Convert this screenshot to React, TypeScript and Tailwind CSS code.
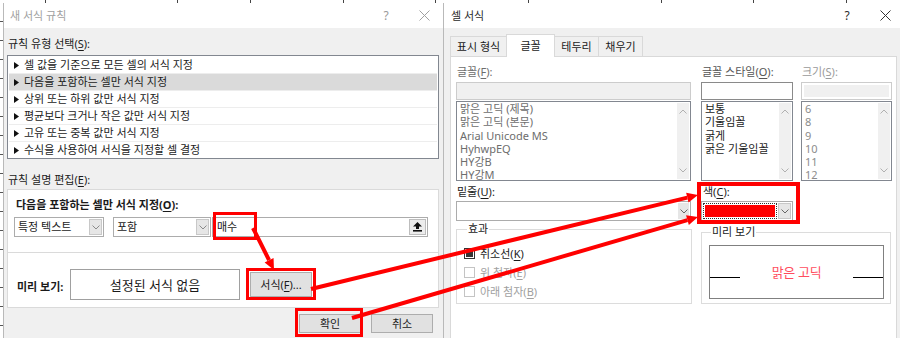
import React from "react";

const rules = [
  "셀 값을 기준으로 모든 셀의 서식 지정",
  "다음을 포함하는 셀만 서식 지정",
  "상위 또는 하위 값만 서식 지정",
  "평균보다 크거나 작은 값만 서식 지정",
  "고유 또는 중복 값만 서식 지정",
  "수식을 사용하여 서식을 지정할 셀 결정",
];

const fonts = ["맑은 고딕 (제목)", "맑은 고딕 (본문)", "Arial Unicode MS", "HyhwpEQ", "HY강B", "HY강M"];
const fontStyles = ["보통", "기울임꼴", "굵게", "굵은 기울임꼴"];
const sizes = ["6", "8", "9", "10", "11", "12"];
const ticks = Array.from({ length: 18 });

function U({ c }: { c: string }) {
  return <span className="underline underline-offset-[2px]">{c}</span>;
}

function Chevron({ up, color = "#8a8a8a" }: { up?: boolean; color?: string }) {
  return (
    <svg width="8" height="5" viewBox="0 0 8 5">
      <path
        d={up ? "M0.5 4.5 L4 1 L7.5 4.5" : "M0.5 0.5 L4 4 L7.5 0.5"}
        fill="none"
        stroke={color}
        strokeWidth="1"
      />
    </svg>
  );
}

function Close({ color }: { color: string }) {
  return (
    <svg width="11" height="11" viewBox="0 0 11 11">
      <path d="M0.5 0.5 L10.5 10.5 M10.5 0.5 L0.5 10.5" stroke={color} strokeWidth="1" />
    </svg>
  );
}

function Select({ text, className }: { text: string; className: string }) {
  return (
    <div className={`flex h-[20px] border border-[#acacac] bg-white ${className}`}>
      <div className="flex-1 pl-[3px] leading-[18px] whitespace-nowrap">{text}</div>
      <div className="m-[1px] flex w-[13px] items-center justify-center border border-[#c8c8c8] bg-[#e6e6e6]">
        <Chevron />
      </div>
    </div>
  );
}

function Scroll() {
  return (
    <div className="my-[1px] mr-[1px] flex w-[12px] flex-col items-center justify-between bg-[#f0f0f0] py-[6px]">
      <Chevron up color="#b0b0b0" />
      <Chevron color="#b0b0b0" />
    </div>
  );
}

function Arrow({ x1, y1, x2, y2 }: { x1: number; y1: number; x2: number; y2: number }) {
  const a = Math.atan2(y2 - y1, x2 - x1);
  const len = 11;
  const half = 5;
  const bx = x2 - len * Math.cos(a);
  const by = y2 - len * Math.sin(a);
  const p1 = `${bx + half * Math.sin(a)},${by - half * Math.cos(a)}`;
  const p2 = `${bx - half * Math.sin(a)},${by + half * Math.cos(a)}`;
  return (
    <g>
      <line x1={x1} y1={y1} x2={bx} y2={by} stroke="#ff0000" strokeWidth="4" />
      <polygon points={`${x2},${y2} ${p1} ${p2}`} fill="#ff0000" />
    </g>
  );
}

function LeftDialog() {
  return (
    <div className="flex w-[441px] flex-col border-x border-[#b9b9b9]">
      {/* title bar */}
      <div className="flex h-[25px] items-center bg-white pl-[6px] pr-[9px] text-[#a0a0a0]">
        <span>새 서식 규칙</span>
        <span className="ml-auto w-[20px] text-center text-[12px] text-[#999]">?</span>
        <span className="ml-[18px] flex w-[20px] justify-center">
          <Close color="#a0a0a0" />
        </span>
      </div>

      <div className="flex-1 bg-[#f0f0f0] pl-[3px] pr-[4px] pt-[8px]">
        <div className="pl-[1px]">
          규칙 유형 선택(<U c="S" />):
        </div>
        <div className="mt-[3px] h-[104px] overflow-hidden border border-[#828790] bg-white p-[1px]">
          {rules.map((r, i) => (
            <div
              key={r}
              className={`flex h-[17px] items-center border-b border-[#ededed] pl-[5px] ${
                i === 1 ? "bg-[#dadada]" : ""
              }`}
            >
              <svg width="5" height="7" viewBox="0 0 5 7">
                <path d="M0 0 L5 3.5 L0 7 Z" fill="#111" />
              </svg>
              <span className="ml-[5px]">{r}</span>
            </div>
          ))}
        </div>

        <div className="mt-[13px] pl-[1px]">
          규칙 설명 편집(<U c="E" />):
        </div>
        <div className="mt-[1px] border border-[#dadada] bg-white">
          <div className="h-[63px] border-b border-[#dadada] pl-[6px] pt-[7px]">
            <div className="pl-[2px] font-bold">
              다음을 포함하는 셀만 서식 지정(<U c="O" />):
            </div>
            <div className="mt-[4px] flex">
              <Select text="특정 텍스트" className="w-[90px]" />
              <Select text="포함" className="ml-[9px] w-[98px]" />
              <div className="ml-[1px] flex h-[20px] w-[216px] border border-[#acacac] bg-white">
                <div className="flex-1 pl-[4px] leading-[18px]">매수</div>
                <div className="m-[1px] flex w-[17px] items-center justify-center border border-[#bdbdbd] bg-[#ececec]">
                  <svg width="9" height="10" viewBox="0 0 9 10">
                    <path d="M4.5 0 L9 4.5 L6 4.5 L6 7 L3 7 L3 4.5 L0 4.5 Z" fill="#111" />
                    <rect x="0" y="8" width="9" height="1.6" fill="#111" />
                  </svg>
                </div>
              </div>
            </div>
          </div>
          <div className="h-[54px] pl-[8px] pt-[16px]">
            <div className="flex items-start">
              <div className="flex h-[31px] w-[54px] items-center pl-[1px] pt-[4px] font-bold">미리 보기:</div>
              <div className="flex h-[31px] w-[170px] items-center justify-center border border-[#a0a0a0] text-[13px]">
                설정된 서식 없음
              </div>
              <div className="ml-[10px] mt-[3px] flex h-[25px] w-[62px] items-center justify-center border border-[#adadad] bg-[#e1e1e1]">
                서식(<U c="F" />)...
              </div>
            </div>
          </div>
        </div>

        <div className="mt-[6px] flex justify-end gap-[10px] pr-[6px]">
          <div className="flex h-[19px] w-[62px] items-center justify-center border border-[#adadad] bg-[#e1e1e1]">
            확인
          </div>
          <div className="flex h-[19px] w-[62px] items-center justify-center border border-[#adadad] bg-[#e1e1e1]">
            취소
          </div>
        </div>
      </div>
    </div>
  );
}

function RightDialog() {
  return (
    <div className="flex flex-1 flex-col">
      {/* title bar */}
      <div className="flex h-[25px] items-center bg-white pl-[7px] pr-[5px] text-[#2a2a2a]">
        <span>셀 서식</span>
        <span className="ml-auto w-[20px] text-center text-[12px]">?</span>
        <span className="ml-[18px] flex w-[20px] justify-center">
          <Close color="#333" />
        </span>
      </div>

      <div className="flex flex-1 flex-col overflow-hidden bg-[#f0f0f0]">
        {/* tabs */}
        <div className="flex items-end pl-[6px] pt-[6px]">
          <div className="flex h-[20px] w-[57px] items-center justify-center border border-b-0 border-[#d9d9d9] bg-[#f0f0f0]">
            표시 형식
          </div>
          <div className="relative z-10 -mb-[1px] -ml-[1px] flex h-[23px] w-[49px] items-center justify-center border border-b-0 border-[#d9d9d9] bg-white">
            글꼴
          </div>
          <div className="-ml-[1px] flex h-[20px] w-[45px] items-center justify-center border border-b-0 border-[#d9d9d9] bg-[#f0f0f0]">
            테두리
          </div>
          <div className="-ml-[1px] flex h-[20px] w-[45px] items-center justify-center border border-b-0 border-[#d9d9d9] bg-[#f0f0f0]">
            채우기
          </div>
        </div>

        <div className="ml-[6px] mr-[3px] h-[300px] shrink-0 border border-[#d9d9d9] bg-white pl-[5px] pt-[7px]">
          {/* font / style / size */}
          <div className="flex">
            <div className="w-[235px]">
              <div className="pl-[1px] text-[#6d6d6d]">
                글꼴(<U c="F" />):
              </div>
              <div className="mt-[2px] h-[18px] border border-[#cccccc] bg-[#f0f0f0]" />
              <div className="mt-[1px] flex h-[80px] border border-[#828790] bg-white">
                <div className="flex-1 pl-[3px] leading-[13.3px] text-[#6d6d6d]">
                  {fonts.map((f) => (
                    <div key={f}>{f}</div>
                  ))}
                </div>
                <Scroll />
              </div>
            </div>
            <div className="ml-[10px] w-[92px]">
              <div className="pl-[1px] text-[#555]">
                글꼴 스타일(<U c="O" />):
              </div>
              <div className="mt-[2px] h-[18px] border border-[#8a8a8a] bg-white" />
              <div className="mt-[1px] flex h-[80px] border border-[#828790] bg-white">
                <div className="flex-1 pl-[3px] leading-[13.3px] text-[#1a1a1a]">
                  {fontStyles.map((f) => (
                    <div key={f}>{f}</div>
                  ))}
                </div>
                <Scroll />
              </div>
            </div>
            <div className="ml-[8px] w-[91px]">
              <div className="pl-[1px] text-[#9a9a9a]">
                크기(<U c="S" />):
              </div>
              <div className="mt-[2px] h-[18px] border border-[#cccccc] bg-white p-[2px]">
                <div className="h-full bg-[#f0f0f0]" />
              </div>
              <div className="mt-[1px] flex h-[80px] border border-[#828790] bg-white">
                <div className="flex-1 pl-[3px] leading-[13.3px] text-[#8c8c8c]">
                  {sizes.map((f) => (
                    <div key={f}>{f}</div>
                  ))}
                </div>
                <Scroll />
              </div>
            </div>
          </div>

          {/* underline / color */}
          <div className="mt-[3px] flex">
            <div className="w-[235px]">
              <div className="pl-[1px]">
                밑줄(<U c="U" />):
              </div>
              <div className="mt-[1px] flex h-[20px] border border-[#acacac] bg-white">
                <div className="flex-1" />
                <div className="m-[1px] flex w-[11px] items-center justify-center bg-[#e6e6e6]">
                  <Chevron color="#666" />
                </div>
              </div>
            </div>
            <div className="ml-[10px] w-[92px]">
              <div className="pl-[2px]">
                색(<U c="C" />):
              </div>
              <div className="mt-[1px] flex h-[20px] border border-[#acacac] bg-white">
                <div className="m-[1px] flex-1 border border-dotted border-[#333] p-[1px]">
                  <div className="h-full bg-[#ff0000]" />
                </div>
                <div className="my-[1px] mr-[1px] flex w-[13px] items-center justify-center border border-[#c8c8c8] bg-[#e6e6e6]">
                  <Chevron color="#666" />
                </div>
              </div>
            </div>
          </div>

          {/* effects / preview */}
          <div className="flex items-start">
            <fieldset className="h-[83px] w-[236px] border border-[#dcdcdc] pl-[7px]">
              <legend className="ml-[3px] px-[1px]">효과</legend>
              <div className="pt-[7px]">
                <div className="flex h-[19px] items-center">
                  <div className="h-[11px] w-[11px] border border-[#333] p-[1px]">
                    <div className="h-full bg-[#333]" />
                  </div>
                  <span className="ml-[5px]">
                    취소선(<U c="K" />)
                  </span>
                </div>
                <div className="flex h-[19px] items-center text-[#a0a0a0]">
                  <div className="h-[11px] w-[11px] border border-[#c4c4c4] bg-white" />
                  <span className="ml-[5px]">
                    위 첨자(<U c="E" />)
                  </span>
                </div>
                <div className="flex h-[19px] items-center text-[#a0a0a0]">
                  <div className="h-[11px] w-[11px] border border-[#c4c4c4] bg-white" />
                  <span className="ml-[5px]">
                    아래 첨자(<U c="B" />)
                  </span>
                </div>
              </div>
            </fieldset>
            <fieldset className="ml-[9px] mt-[3px] h-[80px] w-[190px] border border-[#dcdcdc] pl-[7px]">
              <legend className="ml-[2px] px-[1px]">미리 보기</legend>
              <div className="mt-[5px] flex h-[54px] w-[175px] items-center border border-[#808080]">
                <div className="mt-[10px] h-[1px] w-[30px] bg-black" />
                <div className="flex-1 text-center text-[13px] tracking-[-0.3px] text-[#ff4d5e]">맑은 고딕</div>
                <div className="mt-[10px] h-[1px] w-[30px] bg-black" />
              </div>
            </fieldset>
          </div>
        </div>
      </div>
    </div>
  );
}

export default function App() {
  return (
    <div className="relative h-[338px] w-[900px] overflow-hidden bg-white font-['Noto_Sans','Noto_Sans_CJK_KR',sans-serif] text-[11px] leading-[16px] text-[#1a1a1a]">
      {/* worksheet grid peeking out behind the dialogs */}
      <div className="flex h-[3px]">
        <div className="w-[46px] border-r border-[#444]" />
        <div className="w-[132px] border-r border-[#444]" />
        <div className="w-[73px] border-r border-[#444]" />
        <div className="w-[93px] border-r border-[#444]" />
        <div className="w-[92px] border-r border-[#444]" />
        <div className="w-[93px] border-r border-[#444]" />
        <div className="w-[133px] border-r border-[#444]" />
        <div className="w-[92px] border-r border-[#444]" />
        <div className="w-[93px] border-r border-[#444]" />
      </div>
      <div className="flex h-[335px]">
        <div className="flex w-[3px] flex-col">
          <div className="h-[3px]" />
          {ticks.map((_, i) => (
            <div key={i} className="h-[19px] shrink-0 border-b border-[#555]" />
          ))}
        </div>
        <LeftDialog />
        <RightDialog />
      </div>

      {/* red annotations */}
      <svg className="pointer-events-none absolute left-0 top-0" width="900" height="338" viewBox="0 0 900 338">
        <Arrow x1={253} y1={228} x2={274} y2={270} />
        <Arrow x1={311} y1={289} x2={698} y2={195} />
        <Arrow x1={352} y1={318} x2={698} y2={217} />
        <rect x="214.5" y="213.5" width="41" height="25" fill="none" stroke="#ff0000" strokeWidth="3" />
        <rect x="247.5" y="269.5" width="67" height="29" fill="none" stroke="#ff0000" strokeWidth="3" />
        <rect x="296.5" y="309.5" width="65" height="26" fill="none" stroke="#ff0000" strokeWidth="3" />
        <rect x="699" y="184" width="99" height="38" fill="none" stroke="#ff0000" strokeWidth="4" />
      </svg>
    </div>
  );
}
